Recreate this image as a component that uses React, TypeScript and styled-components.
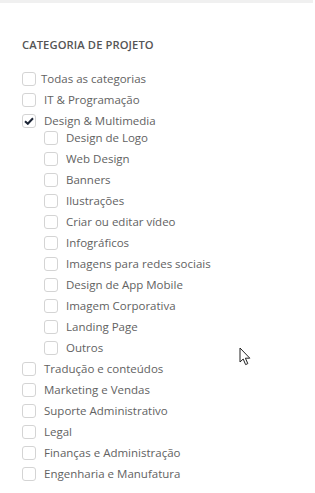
import styled, { createGlobalStyle } from "styled-components";

const GlobalStyle = createGlobalStyle`
    body {
        margin: 0;
        background: #fff;
        font-family: "Open Sans", "Noto Sans", sans-serif;
    }
`;

const Page = styled.div`
    position: relative;
    width: 315px;
    height: 493px;
    overflow: hidden;
    background: #fff;
`;

const TopStrip = styled.div`
    width: 313px;
    height: 3px;
    background: #f0f0f0;
`;

const Panel = styled.div`
    padding: 35px 0 0 22px;
`;

const Heading = styled.h3`
    margin: 0 0 16px 0;
    font-size: 11.2px;
    font-weight: 600;
    color: #555;
    letter-spacing: 0.1px;
    line-height: 14px;
`;

const List = styled.ul<{ $nested?: boolean }>`
    list-style: none;
    margin: ${(p) => (p.$nested ? "-4px 0 0 22px" : "0")};
    padding: 0;
`;

const Row = styled.label`
    display: flex;
    align-items: center;
    height: 21px;
    gap: 5px;
    font-size: 11.5px;
    color: #626262;
    cursor: pointer;
`;

const Box = styled.span`
    box-sizing: border-box;
    width: 14px;
    height: 14px;
    border: 1px solid #d4d4d4;
    border-radius: 3px;
    display: flex;
    align-items: center;
    justify-content: center;
    flex-shrink: 0;
`;

const Label = styled.span<{ $pad?: boolean }>`
    padding-left: ${(p) => (p.$pad ? "3px" : "0")};
`;

const Pointer = styled.svg`
    position: absolute;
    left: 239px;
    top: 347px;
`;

type Item = { name: string; checked?: boolean; pad?: boolean; children?: string[] };

const categories: Item[] = [
    { name: "Todas as categorias" },
    { name: "IT & Programação", pad: true },
    {
        name: "Design & Multimedia",
        checked: true,
        pad: true,
        children: [
            "Design de Logo",
            "Web Design",
            "Banners",
            "Ilustrações",
            "Criar ou editar vídeo",
            "Infográficos",
            "Imagens para redes sociais",
            "Design de App Mobile",
            "Imagem Corporativa",
            "Landing Page",
            "Outros",
        ],
    },
    { name: "Tradução e conteúdos", pad: true },
    { name: "Marketing e Vendas", pad: true },
    { name: "Suporte Administrativo", pad: true },
    { name: "Legal", pad: true },
    { name: "Finanças e Administração", pad: true },
    { name: "Engenharia e Manufatura", pad: true },
];

function Check({ checked, name, pad }: { checked?: boolean; name: string; pad?: boolean }) {
    return (
        <Row>
            <Box>
                {checked && (
                    <svg width="10" height="8" viewBox="0 0 10 8">
                        <path d="M1 4.2 L3.8 6.8 L9 1.2" fill="none" stroke="#1c2536" strokeWidth="2" />
                    </svg>
                )}
            </Box>
            <Label $pad={pad}>{name}</Label>
        </Row>
    );
}

export default function App() {
    return (
        <Page>
            <GlobalStyle />
            <TopStrip />
            <Panel>
                <Heading>CATEGORIA DE PROJETO</Heading>
                <List>
                    {categories.map((c) => (
                        <li key={c.name}>
                            <Check name={c.name} checked={c.checked} pad={c.pad} />
                            {c.children && (
                                <List $nested>
                                    {c.children.map((s) => (
                                        <li key={s}>
                                            <Check name={s} pad />
                                        </li>
                                    ))}
                                </List>
                            )}
                        </li>
                    ))}
                </List>
            </Panel>
            <Pointer width="12" height="19" viewBox="0 0 12 19">
                <path d="M1 1 L1 15 L4.2 12 L6.6 17.6 L8.8 16.6 L6.4 11.2 L10.8 11.2 Z" fill="#fff" stroke="#222" strokeWidth="1" strokeLinejoin="round" />
            </Pointer>
        </Page>
    );
}
